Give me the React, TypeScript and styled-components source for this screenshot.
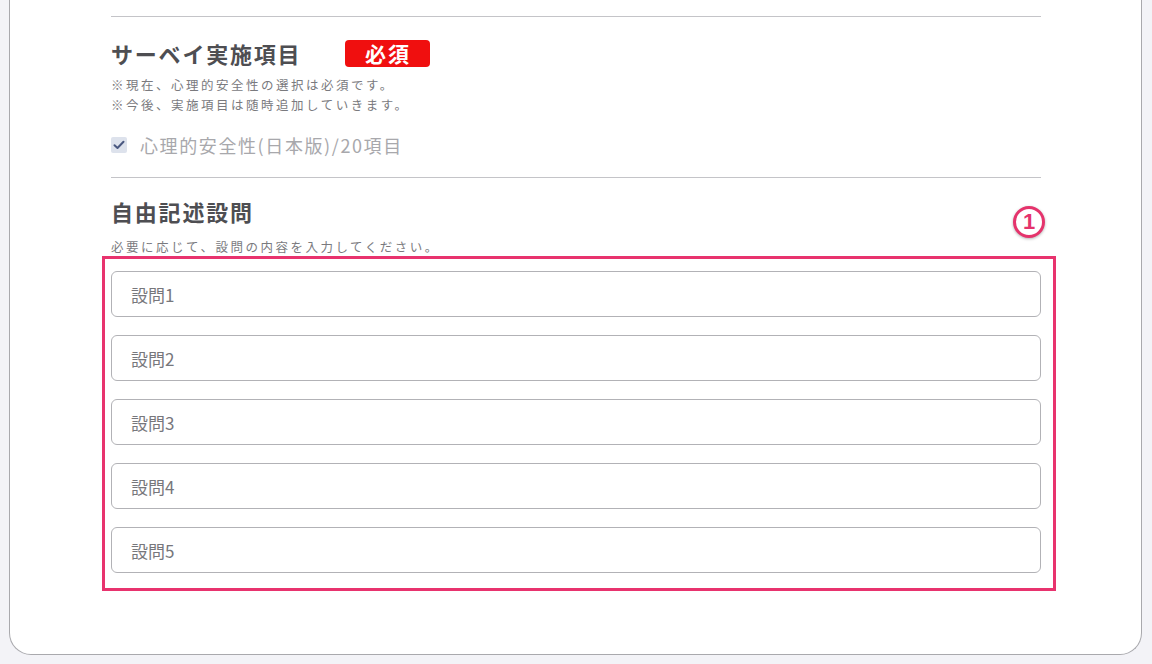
import React from "react";
import styled, { createGlobalStyle } from "styled-components";

const Global = createGlobalStyle`
  html, body { margin: 0; padding: 0; background: #f3f3f7; }
  body { font-family: "Noto Sans CJK JP", "Noto Sans", sans-serif; }
`;

const Page = styled.div`
  width: 1152px;
  height: 664px;
  overflow: hidden;
  padding: 0 10px 9px 9px;
  box-sizing: border-box;
  display: flex;
  flex-direction: column;
`;

const Card = styled.div`
  flex: 1;
  background: #ffffff;
  border: 1px solid #a9a9ad;
  border-top: none;
  border-radius: 0 0 22px 22px;
  padding: 16px 100px 0 101px;
  display: flex;
  flex-direction: column;
`;

const Rule = styled.hr<{ $top?: number }>`
  margin: ${(p) => p.$top ?? 0}px 0 0;
  border: none;
  border-top: 1px solid #c4c4c8;
  height: 0;
`;

const TitleRow = styled.div<{ $top: number }>`
  display: flex;
  align-items: center;
  gap: 44px;
  margin-top: ${(p) => p.$top}px;
  height: 30px;
`;

const Title = styled.h2`
  margin: 0;
  font-size: 22px;
  line-height: 30px;
  font-weight: 700;
  color: #4e4e52;
  letter-spacing: 1.8px;
`;

const Badge = styled.span`
  display: inline-flex;
  align-items: center;
  justify-content: center;
  width: 85px;
  height: 27px;
  border-radius: 4px;
  background: #f00f0f;
  color: #ffffff;
  font-size: 21px;
  font-weight: 700;
  letter-spacing: 2px;
  line-height: 1;
`;

const Note = styled.p<{ $top: number }>`
  margin: ${(p) => p.$top}px 0 0;
  font-size: 12.5px;
  line-height: 20px;
  color: #7a7a7e;
  letter-spacing: 2.5px;
`;

const CheckRow = styled.label`
  display: flex;
  align-items: center;
  gap: 13px;
  margin-top: 18px;
  height: 24px;
`;

const CheckBox = styled.span`
  width: 16px;
  height: 16px;
  border-radius: 2px;
  background: #dde2ec;
  display: inline-flex;
  align-items: center;
  justify-content: center;
`;

const CheckLabel = styled.span`
  font-size: 18px;
  color: #a8a8ac;
  letter-spacing: 1.6px;
`;

const InputList = styled.div`
  position: relative;
  margin-top: 14px;
  display: flex;
  flex-direction: column;
  gap: 18px;
`;

const QuestionInput = styled.input`
  height: 46px;
  box-sizing: border-box;
  border: 1px solid #b2b2b6;
  border-radius: 6px;
  padding: 0 19px;
  font-family: "Noto Sans CJK JP", "Noto Sans", sans-serif;
  font-size: 17px;
  color: #555;
  background: #fff;
  outline: none;
  &::placeholder { color: #77777c; }
`;

const Highlight = styled.div`
  position: absolute;
  left: -9px;
  right: -15px;
  top: -15px;
  bottom: -18px;
  border: 3px solid #e8336e;
  pointer-events: none;
`;

const Marker = styled.div`
  position: absolute;
  right: -4px;
  top: -65px;
  width: 26px;
  height: 26px;
  border-radius: 50%;
  border: 3px solid #e5336c;
  background: #fff;
  box-shadow: 0 1px 3px rgba(0, 0, 0, 0.3);
  color: #e5336c;
  font-family: "Liberation Sans", Arial, sans-serif;
  font-size: 22px;
  font-weight: 700;
  display: flex;
  align-items: center;
  justify-content: center;
  line-height: 1;
`;

const questions = ["設問1", "設問2", "設問3", "設問4", "設問5"];

export default function App() {
  return (
    <>
      <Global />
      <Page>
        <Card>
          <Rule />
          <TitleRow $top={21}>
            <Title>サーベイ実施項目</Title>
            <Badge>必須</Badge>
          </TitleRow>
          <Note $top={7}>
            ※現在、心理的安全性の選択は必須です。
            <br />
            ※今後、実施項目は随時追加していきます。
          </Note>
          <CheckRow>
            <CheckBox>
              <svg width="12" height="10" viewBox="0 0 12 10">
                <path d="M1.5 5.2 L4.5 8 L10.5 1.8" fill="none" stroke="#4a5880" strokeWidth="2" strokeLinecap="round" strokeLinejoin="round" />
              </svg>
            </CheckBox>
            <CheckLabel>心理的安全性(日本版)/20項目</CheckLabel>
          </CheckRow>
          <Rule $top={20} />
          <TitleRow $top={18}>
            <Title>自由記述設問</Title>
          </TitleRow>
          <Note $top={11}>必要に応じて、設問の内容を入力してください。</Note>
          <InputList>
            {questions.map((q) => (
              <QuestionInput key={q} placeholder={q} />
            ))}
            <Highlight />
            <Marker>1</Marker>
          </InputList>
        </Card>
      </Page>
    </>
  );
}
